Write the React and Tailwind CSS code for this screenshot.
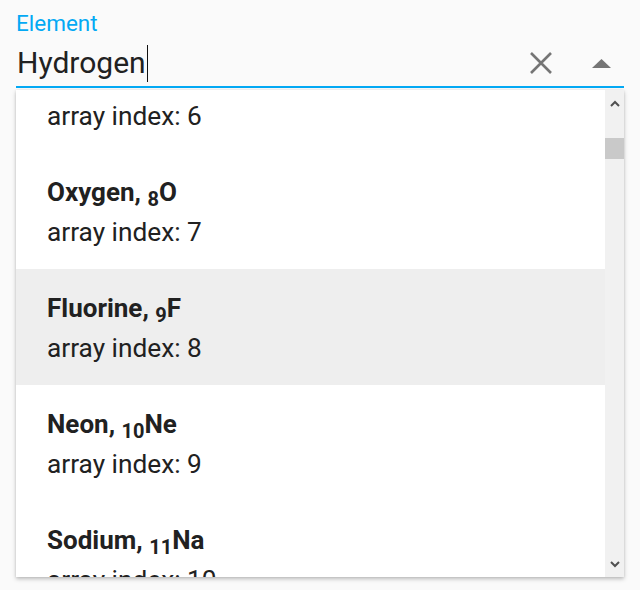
import React from "react";

const items = [
  { name: "Carbon", sym: "C", z: 6, idx: 5 },
  { name: "Nitrogen", sym: "N", z: 7, idx: 6 },
  { name: "Oxygen", sym: "O", z: 8, idx: 7 },
  { name: "Fluorine", sym: "F", z: 9, idx: 8 },
  { name: "Neon", sym: "Ne", z: 10, idx: 9 },
  { name: "Sodium", sym: "Na", z: 11, idx: 10 },
];

export default function App() {
  return (
    <div
      className="w-[640px] h-[590px] bg-[#fafafa] px-4 overflow-hidden text-[#212121]"
      style={{ fontFamily: "Roboto, 'Liberation Sans', sans-serif" }}
    >
      <div className="pt-3 text-[22.5px] leading-[22.5px] text-[#03a9f4]">Element</div>
      <div className="mt-[10.5px] flex items-center h-[36px]">
        <span className="text-[30px] leading-[36px] text-[#212121] pl-[1px]">Hydrogen</span>
        <span className="w-px h-[37px] bg-[#111] ml-[1px]" />
        <div className="ml-auto flex items-center">
          <svg width="22" height="22" viewBox="0 0 22 22" className="mr-[40px]">
            <path d="M1 1 L21 21 M21 1 L1 21" stroke="#757575" strokeWidth="2.6" fill="none" />
          </svg>
          <svg width="19" height="9" viewBox="0 0 19 9" className="mr-[13px]">
            <path d="M0 9 L9.5 0 L19 9 Z" fill="#757575" />
          </svg>
        </div>
      </div>
      <div className="mt-[5px] h-[2px] bg-[#03a9f4]" />
      <div className="mt-[2px] h-[487px] bg-white flex shadow-[0_2px_4px_rgba(0,0,0,0.25),0_0_2px_rgba(0,0,0,0.08)]">
        <div className="flex-1 overflow-hidden">
          <div className="-mt-[169px]">
            {items.map((it) => (
              <div
                key={it.idx}
                className={`h-[116px] pl-[31px] pt-[20px] ${it.idx === 8 ? "bg-[#eeeeee]" : ""}`}
              >
                <div className="text-[26px] leading-[39px] font-bold text-[#212121]">
                  {it.name},{" "}
                  <span className="text-[20px] relative top-[5px]">{it.z}</span>
                  {it.sym}
                </div>
                <div className="text-[26.25px] leading-[36px] text-[#212121]">
                  array index: {it.idx}
                </div>
              </div>
            ))}
          </div>
        </div>
        <div className="w-[19px] bg-[#f1f1f1] flex flex-col items-center">
          <svg width="10" height="7" viewBox="0 0 10 7" className="mt-[10px]">
            <path d="M1 6 L5 2 L9 6" stroke="#505050" strokeWidth="2" fill="none" />
          </svg>
          <div className="mt-[31px] w-[19px] h-[21px] bg-[#c9c9c9]" />
          <div className="flex-1" />
          <svg width="10" height="7" viewBox="0 0 10 7" className="mb-[9px]">
            <path d="M1 1 L5 5 L9 1" stroke="#505050" strokeWidth="2" fill="none" />
          </svg>
        </div>
      </div>
    </div>
  );
}
